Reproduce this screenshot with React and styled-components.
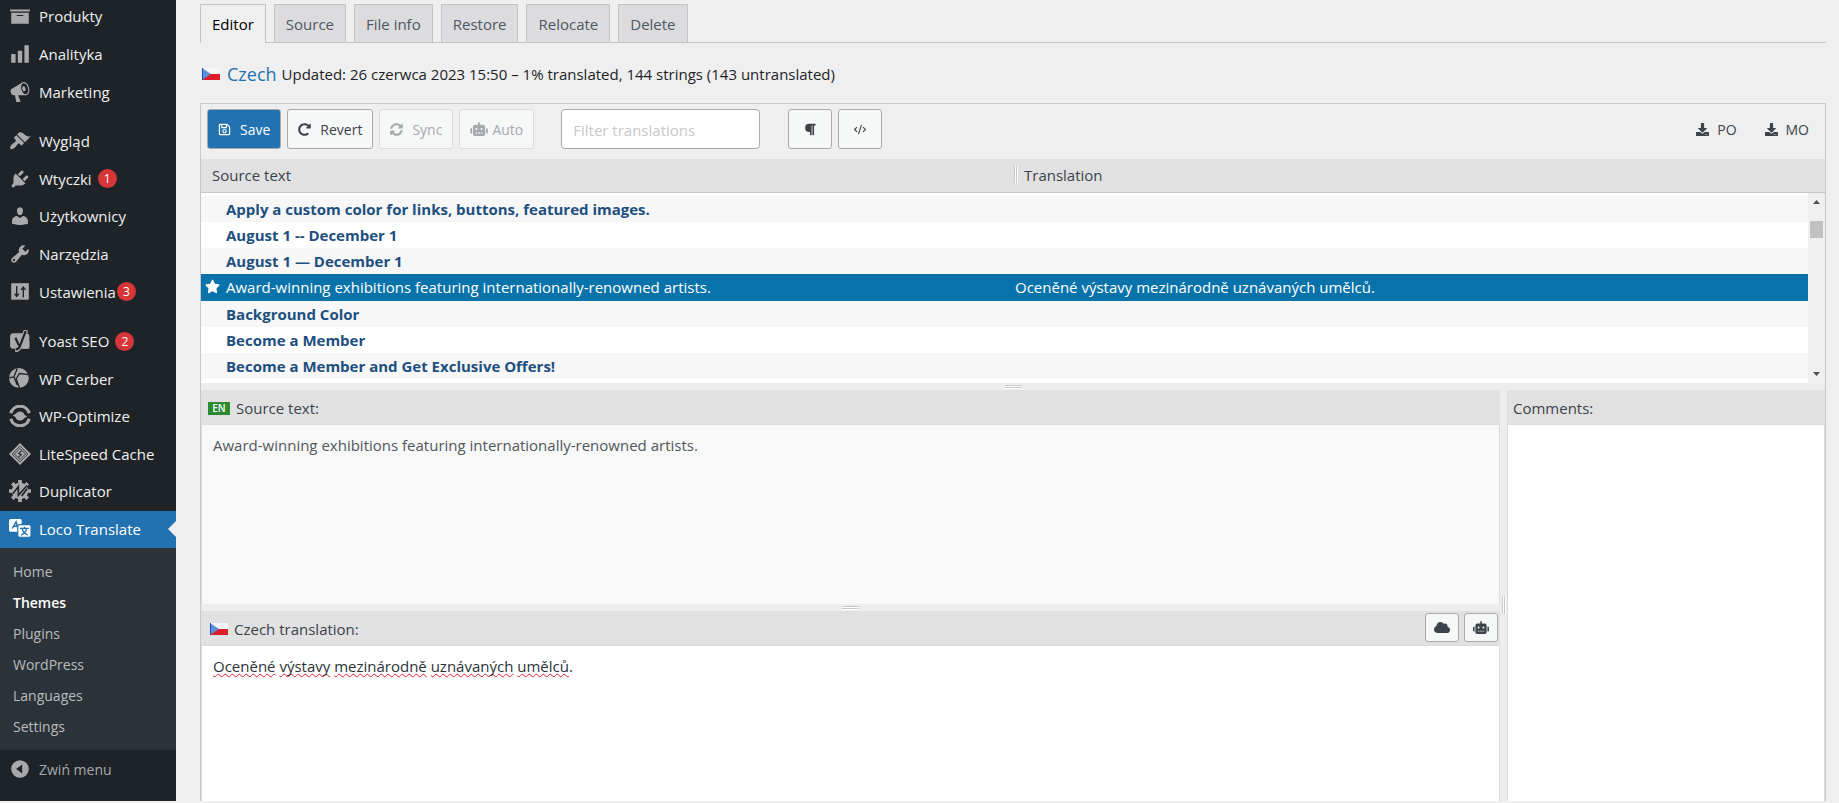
import React, { useState } from 'react'
import styled, { createGlobalStyle, css } from 'styled-components'
import { FaRegSave, FaRedoAlt, FaSyncAlt, FaRobot, FaParagraph, FaDownload, FaCloud, FaStar } from 'react-icons/fa'
import { LuCodeXml } from 'react-icons/lu'

const icons = {
    products: <path d="M19 4v2H1V4h18zM2 7h16v10H2V7zm11 3V9H7v1h6z" />,
    analytics: <path d="M18 18V2h-4v16h4zm-6 0V7H8v11h4zm-6 0v-8H2v8h4z" />,
    marketing: <path d="M18.15 5.94c.46 1.62.38 3.22-.02 4.48-.42 1.28-1.26 2.18-2.3 2.48-.16.06-.26.06-.4.06-.06.02-.12.02-.18.02-.06.02-.14.02-.22.02h-6.8l2.22 5.5c.02.14-.06.26-.14.34-.08.1-.24.16-.34.16H6.95c-.1 0-.26-.06-.34-.16-.08-.08-.16-.2-.14-.34l-1-5.5H4.25l-.02-.02c-.5.06-1.08-.18-1.54-.62s-.88-1.08-1.06-1.88c-.24-.8-.2-1.56-.02-2.2.18-.62.58-1.08 1.06-1.3l.02-.02 9-5.4c.1-.06.18-.1.24-.16.06-.04.14-.08.24-.12.16-.08.28-.12.5-.18 1.04-.3 2.24.1 3.22.98s1.84 2.24 2.26 3.86zm-2.58 5.98h-.02c.4-.1.74-.34 1.04-.7.58-.7.86-1.76.86-3.04 0-.64-.1-1.3-.28-1.98-.34-1.36-1.02-2.5-1.78-3.24s-1.68-1.1-2.46-.88c-.82.22-1.4.96-1.7 2-.32 1.04-.28 2.36.06 3.72.38 1.36 1 2.5 1.8 3.24.78.74 1.62 1.1 2.48.88zm-2.54-7.08c.22-.04.42-.02.62.04.38.16.76.48 1.02 1s.42 1.2.42 1.78c0 .3-.04.56-.12.8-.18.48-.44.84-.86.94-.34.1-.8-.06-1.14-.4s-.64-.86-.78-1.5c-.18-.62-.12-1.24.02-1.72s.48-.84.82-.94z" />,
    appearance: <path d="M14.48 11.06L7.41 3.99l1.5-1.5c.5-.56 2.3-.47 3.51.32 1.21.8 1.43 1.28 2.91 2.1 1.18.64 2.45 1.26 4.45.85zm-.71.71L6.7 4.7 4.93 6.47c-.39.39-.39 1.02 0 1.41l1.06 1.06c.39.39.39 1.03 0 1.42-.6.6-1.43 1.11-2.21 1.69-.35.26-.7.53-1.01.84C1.43 14.23.4 16.08 1.4 17.07c.99 1 2.84-.03 4.18-1.36.31-.31.58-.66.85-1.02.57-.78 1.08-1.61 1.69-2.21.39-.39 1.02-.39 1.41 0l1.06 1.06c.39.39 1.02.39 1.41 0z" />,
    plugins: <path d="M13.11 4.36L9.87 7.6 8 5.73l3.24-3.24c.35-.34 1.05-.2 1.56.32.52.51.66 1.21.31 1.55zm-8 1.77l.91-1.12 9.01 9.01-1.19.84c-.71.71-2.63 1.16-3.82 1.16H6.14L4.9 17.26c-.59.59-1.54.59-2.12 0-.59-.58-.59-1.53 0-2.12l1.24-1.24v-3.88c0-1.13.4-3.19 1.09-3.89zm7.26 3.97l3.24-3.24c.34-.35 1.04-.21 1.55.31.52.51.66 1.21.31 1.55l-3.24 3.25z" />,
    users: <path d="M10 9.25c-2.27 0-2.73-3.44-2.73-3.44C7 4.02 7.82 2 9.97 2c2.16 0 2.98 2.02 2.71 3.81 0 0-.41 3.44-2.68 3.44zm0 2.57L12.72 10c2.39 0 4.52 2.33 4.52 4.53v2.49s-3.65 1.13-7.24 1.13c-3.65 0-7.24-1.13-7.24-1.13v-2.49c0-2.25 1.94-4.48 4.47-4.48z" />,
    tools: <path d="M16.68 9.77c-1.34 1.34-3.3 1.67-4.95.99l-5.41 6.52c-.99.99-2.59.99-3.58 0s-.99-2.59 0-3.57l6.52-5.42c-.68-1.65-.35-3.61.99-4.95 1.28-1.28 3.12-1.62 4.72-1.06l-2.89 2.89 2.82 2.82 2.86-2.87c.53 1.58.18 3.39-1.08 4.65zM3.81 16.21c.4.39 1.04.39 1.43 0 .4-.4.4-1.04 0-1.43-.39-.4-1.03-.4-1.43 0-.39.39-.39 1.03 0 1.43z" />,
    settings: (
        <>
            <path d="M2 2h16v15H2z" />
            <path d="M7 4.500v9M5 11.500l2 2.500 2-2.500M13 15V5.500M11 8l2-2.500L15 8" fill="none" stroke="#1d2327" strokeWidth="1.200" />
        </>
    ),
    yoast: (
        <>
            <rect x="1" y="3" width="17.500" height="14" rx="3" />
            <path d="M13 10h5.500v7H13z" />
            <path d="M15.500 0L10 14.500Q8.700 18.300 5.500 18.500" fill="none" stroke="currentColor" strokeWidth="4" />
            <path d="M15.200 1L10 14.500Q8.700 17.500 6 17.700M5.800 7l3.200 7" fill="none" stroke="#1d2327" strokeWidth="2" />
        </>
    ),
    cerber: (
        <>
            <circle cx="9" cy="9" r="9" />
            <path d="M7.500.5L4.500 8l3 7.500M4.500 8L0 9M18 6l-8.500-1L6.500 10l3 8" fill="none" stroke="#1d2327" strokeWidth="1.200" />
        </>
    ),
    optimize: (
        <>
            <path d="M1.600 7.500A8.700 8.700 0 0 1 18.400 7.500M18.400 12.500A8.700 8.700 0 0 1 1.600 12.500" fill="none" stroke="currentColor" strokeWidth="2.800" />
            <path d="M3.500 9.500l4-2.500v5zM16.500 10.500l-4 2.500V8z" />
            <circle cx="10" cy="10" r="4.200" />
        </>
    ),
    litespeed: (
        <>
            <path d="M10 0l10 10-10 10L0 10z" />
            <path d="M10 2.800L17.200 10 10 17.200 2.800 10zM10 5L15 10 10 15 5 10z" fill="none" stroke="#1d2327" strokeWidth=".7" />
            <path d="M11.500 7L8.800 9.500l2.500 1L8.500 13" fill="none" stroke="#1d2327" strokeWidth="1" />
        </>
    ),
    duplicator: (
        <>
            <circle cx="10" cy="10" r="7.500" />
            <path d="M10 0v20M0 10h20M3 3l14 14M3 17L17 3" fill="none" stroke="currentColor" strokeWidth="3.400" />
            <path d="M3.500 12.500l5-6.500v8L16.500 5M11.500 14.500l5-6.500" fill="none" stroke="#1d2327" strokeWidth="1.500" />
        </>
    ),
    loco: (
        <>
            <rect x="0" y="1" width="11.500" height="11.500" rx="1.500" />
            <path d="M3 9.500L6.500 3.500 8 9.500M4.500 7.500h3" fill="none" stroke="#2271b1" strokeWidth="1.300" />
            <rect x="8" y="6" width="12" height="11.500" rx="1.500" stroke="#2271b1" strokeWidth="1" />
            <path d="M10 9.500h8M14 8v1.500M11 15.500Q15.500 13.500 16 9.500M12 9.500q.500 4 5 6" fill="none" stroke="#2271b1" strokeWidth="1.200" />
        </>
    ),
    collapse: <path fillRule="evenodd" d="M10 2a8 8 0 1 0 0 16 8 8 0 0 0 0-16zM12 5.800v8.400L6.500 10z" />,
}

const menuGroups = [
    [
        { icon: 'products', label: 'Produkty' },
        { icon: 'analytics', label: 'Analityka' },
        { icon: 'marketing', label: 'Marketing' },
    ],
    [
        { icon: 'appearance', label: 'Wygląd' },
        { icon: 'plugins', label: 'Wtyczki', count: 1 },
        { icon: 'users', label: 'Użytkownicy' },
        { icon: 'tools', label: 'Narzędzia' },
        { icon: 'settings', label: 'Ustawienia', count: 3, tight: true },
    ],
    [
        { icon: 'yoast', label: 'Yoast SEO', count: 2 },
        { icon: 'cerber', label: 'WP Cerber' },
        { icon: 'optimize', label: 'WP-Optimize' },
        { icon: 'litespeed', label: 'LiteSpeed Cache' },
        { icon: 'duplicator', label: 'Duplicator' },
        { icon: 'loco', label: 'Loco Translate', current: true },
    ],
]

const subMenu = ['Home', 'Themes', 'Plugins', 'WordPress', 'Languages', 'Settings']
const tabs = ['Editor', 'Source', 'File info', 'Restore', 'Relocate', 'Delete']

const strings = [
    { source: 'Apply a custom color for links, buttons, featured images.', target: '' },
    { source: 'August 1 -- December 1', target: '' },
    { source: 'August 1 — December 1', target: '' },
    {
        source: 'Award-winning exhibitions featuring internationally-renowned artists.',
        target: 'Oceněné výstavy mezinárodně uznávaných umělců.',
    },
    { source: 'Background Color', target: '' },
    { source: 'Become a Member', target: '' },
    { source: 'Become a Member and Get Exclusive Offers!', target: '' },
]

const MenuIcon = ({ name }) => (
    <IconSvg viewBox="0 0 20 20" aria-hidden="true">{icons[name]}</IconSvg>
)

const CzechFlag = () => (
    <FlagSvg viewBox="0 0 18 12" aria-hidden="true">
        <rect width="18" height="12" fill="#f6f6f6" />
        <rect y="6" width="18" height="6" fill="#dc1f2b" />
        <path d="M0 0l9 6-9 6z" fill="#5b8fd6" />
        <path d="M0 0v12" stroke="#1d50b0" strokeWidth="2" />
    </FlagSvg>
)

const App = () => {
    const [selected, setSelected] = useState(3)
    const [filter, setFilter] = useState('')
    const [comments, setComments] = useState('')
    const [translations, setTranslations] = useState(strings.map((s) => s.target))

    const changeTranslation = (e) => {
        const next = [...translations]
        next[selected] = e.target.value
        setTranslations(next)
    }

    return (
        <>
            <GlobalStyle />
            <Page>
                <Sidebar>
                    {menuGroups.map((group, i) => (
                        <MenuGroup key={i}>
                            {group.map((item) => (
                                <MenuLink href="#" key={item.label} $current={item.current}>
                                    <MenuIcon name={item.icon} />
                                    {item.label}
                                    {item.count && <Count $tight={item.tight}>{item.count}</Count>}
                                </MenuLink>
                            ))}
                        </MenuGroup>
                    ))}
                    <SubMenu>
                        {subMenu.map((label) => (
                            <SubLink href="#" key={label} $current={label === 'Themes'}>{label}</SubLink>
                        ))}
                    </SubMenu>
                    <Collapse type="button">
                        <MenuIcon name="collapse" />
                        Zwiń menu
                    </Collapse>
                </Sidebar>

                <Main>
                    <Tabs>
                        {tabs.map((tab) => (
                            <Tab href="#" key={tab} $active={tab === 'Editor'}>{tab}</Tab>
                        ))}
                    </Tabs>

                    <Heading>
                        <CzechFlag />
                        <Language>Czech</Language>
                        <Status>Updated: 26 czerwca 2023 15:50 – 1% translated, 144 strings (143 untranslated)</Status>
                    </Heading>

                    <Editor>
                        <Toolbar>
                            <Buttons>
                                <Button type="button" $primary><FaRegSave />Save</Button>
                                <Button type="button"><FaRedoAlt />Revert</Button>
                                <Button type="button" disabled><FaSyncAlt />Sync</Button>
                                <Button type="button" disabled $tight><FaRobot />Auto</Button>
                            </Buttons>
                            <Filter
                                type="text"
                                aria-label="Filter translations"
                                placeholder="Filter translations"
                                value={filter}
                                onChange={(e) => setFilter(e.target.value)}
                            />
                            <Buttons>
                                <IconButton type="button" aria-label="Toggle invisibles"><FaParagraph /></IconButton>
                                <IconButton type="button" aria-label="Toggle code view"><LuCodeXml /></IconButton>
                            </Buttons>
                            <Downloads>
                                <Download href="#"><FaDownload />PO</Download>
                                <Download href="#"><FaDownload />MO</Download>
                            </Downloads>
                        </Toolbar>

                        <ListWrap>
                            <List>
                                <ListHead>
                                    <ListRow>
                                        <HeadCell>Source text</HeadCell>
                                        <HeadCell><Grip $vertical />Translation</HeadCell>
                                    </ListRow>
                                </ListHead>
                                <ListBody>
                                    {strings.map((string, i) => (
                                        <StringRow
                                            key={string.source}
                                            $selected={i === selected}
                                            $todo={!translations[i]}
                                            onClick={() => setSelected(i)}
                                        >
                                            <SourceCell>
                                                <Mark>{i === selected && <FaStar />}</Mark>
                                                {string.source}
                                            </SourceCell>
                                            <TargetCell>{translations[i]}</TargetCell>
                                        </StringRow>
                                    ))}
                                </ListBody>
                            </List>
                            <ScrollBar>
                                <Arrow viewBox="0 0 7 4"><path d="M0 4l3.500-4L7 4z" /></Arrow>
                                <Thumb />
                                <Arrow viewBox="0 0 7 4"><path d="M0 0l3.500 4L7 0z" /></Arrow>
                            </ScrollBar>
                        </ListWrap>

                        <Splitter><Grip /></Splitter>

                        <Panes>
                            <Column>
                                <Pane>
                                    <PaneHead>
                                        <LangBadge>EN</LangBadge>
                                        Source text:
                                    </PaneHead>
                                    <SourceText>{strings[selected].source}</SourceText>
                                </Pane>
                                <Splitter><Grip /></Splitter>
                                <Pane>
                                    <PaneHead>
                                        <CzechFlag />
                                        <label htmlFor="translation">Czech translation:</label>
                                        <PaneTools>
                                            <SmallButton type="button" aria-label="Needs review"><FaCloud /></SmallButton>
                                            <SmallButton type="button" aria-label="Suggestions"><FaRobot /></SmallButton>
                                        </PaneTools>
                                    </PaneHead>
                                    <TextBox>
                                        <Spelling aria-hidden="true">
                                            {translations[selected].split(/([\s.]+)/).map((word, i) => (
                                                i % 2 ? word : <u key={i}>{word}</u>
                                            ))}
                                        </Spelling>
                                        <TextArea
                                            id="translation"
                                            spellCheck="false"
                                            value={translations[selected]}
                                            onChange={changeTranslation}
                                        />
                                    </TextBox>
                                </Pane>
                            </Column>
                            <SideSplitter><Grip $vertical /></SideSplitter>
                            <Pane>
                                <PaneHead $plain>
                                    <label htmlFor="comments">Comments:</label>
                                </PaneHead>
                                <TextBox>
                                    <TextArea
                                        id="comments"
                                        value={comments}
                                        onChange={(e) => setComments(e.target.value)}
                                    />
                                </TextBox>
                            </Pane>
                        </Panes>
                    </Editor>
                </Main>
            </Page>
        </>
    )
}

const GlobalStyle = createGlobalStyle`
    * {
        box-sizing: border-box;
    }

    body {
        margin: 0;
        background: #efefef;
        color: #1d2327;
        font-family: "Open Sans", "Noto Sans", sans-serif;
        font-size: 15px;
    }

    button, input, textarea {
        font-family: inherit;
    }

    a {
        text-decoration: none;
    }
`

const Page = styled.div`
    display: flex;
    height: 100vh;
    padding-bottom: 2px;
    overflow: hidden;
`

const Sidebar = styled.nav`
    flex: none;
    width: 176px;
    background: #1d2327;
    overflow: hidden;
`

const MenuGroup = styled.div`
    display: grid;
    grid-auto-rows: 1fr;
    height: 225px;
    margin-top: 12px;

    &:nth-child(1) {
        height: 113px;
        margin-top: -2px;
    }

    &:nth-child(2) {
        height: 188px;
    }
`

const IconSvg = styled.svg`
    flex: none;
    width: 22px;
    height: 22px;
    fill: currentColor;
    color: #a7aaad;
`

const MenuLink = styled.a`
    display: flex;
    align-items: center;
    padding: 0 0 1px 9px;
    color: #f0f0f1;

    ${IconSvg} {
        margin-right: 8px;
    }

    ${({ $current }) => $current && css`
        position: relative;
        background: #2271b1;
        color: #fff;

        ${IconSvg} {
            color: #fff;
        }

        &::after {
            content: "";
            position: absolute;
            right: 0;
            top: 10px;
            border: 8px solid transparent;
            border-left: none;
            border-right-color: #efefef;
        }
    `}
`

const Count = styled.span`
    min-width: 19px;
    height: 19px;
    margin-left: ${({ $tight }) => ($tight ? '1px' : '6px')};
    border-radius: 10px;
    background: #d63638;
    color: #fff;
    font-size: 12px;
    line-height: 19px;
    text-align: center;
`

const SubMenu = styled.div`
    padding: 8px 0;
    background: #2c3338;
`

const SubLink = styled.a`
    display: block;
    padding-left: 13px;
    font-size: 14px;
    line-height: 31px;
    color: ${({ $current }) => ($current ? '#fff' : '#b9bcbe')};
    font-weight: ${({ $current }) => ($current ? 600 : 400)};
`

const Collapse = styled.button`
    display: flex;
    align-items: center;
    gap: 8px;
    width: 100%;
    height: 38px;
    padding: 0 0 0 9px;
    border: none;
    background: none;
    color: #a7aaad;
    font-size: 14px;
`

const Main = styled.main`
    flex: 1;
    min-width: 0;
    display: flex;
    flex-direction: column;
    padding: 4px 13px 0 24px;
`

const Tabs = styled.nav`
    display: flex;
    gap: 8px;
    border-bottom: 1px solid #c3c4c7;
`

const Tab = styled.a`
    height: 38px;
    padding: 0 11px;
    border: 1px solid #c3c4c7;
    border-bottom: none;
    background: #dcdcde;
    color: #50575e;
    font-weight: 500;
    line-height: 39px;

    ${({ $active }) => $active && css`
        height: 39px;
        margin-bottom: -1px;
        background: #efefef;
        color: #000;
    `}
`

const FlagSvg = styled.svg`
    width: 18px;
    height: 12px;
`

const Heading = styled.header`
    display: flex;
    align-items: center;
    height: 60px;
    padding: 2px 2px 0;

    ${FlagSvg} {
        margin-right: 7px;
    }
`

const Language = styled.h1`
    margin: 0 5px 0 0;
    color: #2271b1;
    font-size: 18px;
    font-weight: 500;
`

const Status = styled.span`
    font-size: 15px;
`

const Editor = styled.section`
    flex: 1;
    min-height: 0;
    display: flex;
    flex-direction: column;
    border: 1px solid #c8c8c8;
    border-bottom: none;
`

const Toolbar = styled.div`
    display: flex;
    align-items: flex-start;
    height: 55px;
    padding: 5px 6px;
`

const Buttons = styled.div`
    display: flex;
    gap: 6px;
`

const Button = styled.button`
    display: flex;
    align-items: center;
    gap: ${({ $tight }) => ($tight ? '4px' : '9px')};
    height: 40px;
    padding: 0 10px;
    border: 1px solid #aaa;
    border-radius: 3px;
    background: ${({ $primary }) => ($primary ? '#2271b1' : '#f6f7f7')};
    color: ${({ $primary }) => ($primary ? '#fff' : '#3c434a')};
    font-size: 14px;

    svg {
        width: ${({ $tight }) => ($tight ? '18px' : '13px')};
        height: ${({ $tight }) => ($tight ? '14px' : '13px')};
    }

    &:disabled {
        border-color: #dcdcde;
        color: #a7aaad;
    }
`

const IconButton = styled(Button)`
    justify-content: center;
    width: 44px;
    padding: 0;

    svg {
        width: 14px;
    }
`

const SmallButton = styled(Button)`
    justify-content: center;
    width: 34px;
    height: 29px;
    padding: 0;

    svg {
        width: 16px;
    }
`

const Filter = styled.input`
    width: 199px;
    height: 40px;
    margin: 0 28px 0 27px;
    padding: 2px 11px 0;
    border: 1px solid #aaa;
    border-radius: 4px;
    background: #fff;
    color: #2c3338;
    font-size: 15px;

    &::placeholder {
        color: #c8c8c8;
    }
`

const Downloads = styled.div`
    display: flex;
    gap: 28px;
    margin-left: auto;
    padding-right: 10px;
`

const Download = styled.a`
    display: flex;
    align-items: center;
    gap: 8px;
    height: 40px;
    color: #3c434a;
    font-size: 14px;

    svg {
        width: 13px;
        height: 13px;
    }
`

const ListWrap = styled.div`
    position: relative;
`

const List = styled.table`
    display: block;
`

const ListHead = styled.thead`
    display: block;
    border-bottom: 1px solid #c8c8c8;
    background: #e1e1e1;
`

const ListRow = styled.tr`
    display: grid;
    grid-template-columns: 1fr 1fr;
`

const Grip = styled.i`
    display: block;
    width: ${({ $vertical }) => ($vertical ? '4px' : '17px')};
    height: ${({ $vertical }) => ($vertical ? '17px' : '4px')};
    background: repeating-linear-gradient(
        ${({ $vertical }) => ($vertical ? '90deg' : '180deg')},
        #c8c8c8 0 1px,
        #fff 1px 2px
    );
`

const HeadCell = styled.th`
    display: flex;
    align-items: center;
    height: 33px;
    padding: 0 0 2px 11px;
    color: #3c434a;
    font-weight: 400;

    ${Grip} {
        margin: 0 6px 0 -10px;
    }
`

const ListBody = styled.tbody`
    display: block;
    padding: 3px 0 4px;
    background: #fff;
`

const StringRow = styled(ListRow)`
    height: ${({ $selected }) => ($selected ? '27px' : '26px')};
    color: #1d4f7f;
    font-weight: ${({ $todo }) => ($todo ? 700 : 400)};
    line-height: 26px;
    white-space: nowrap;

    &:nth-child(odd) {
        background: #f7f7f7;
    }

    ${({ $selected }) => $selected && css`
        &&& {
            background: #0873aa;
            color: #fff;
        }
    `}
`

const SourceCell = styled.td`
    display: flex;
    padding: 0;
`

const TargetCell = styled.td`
    padding: 0 0 0 2px;
`

const Mark = styled.span`
    flex: none;
    display: flex;
    justify-content: center;
    width: 25px;
    padding: 5px 2px 0 0;
`

const ScrollBar = styled.div`
    position: absolute;
    top: 34px;
    right: 0;
    bottom: 0;
    display: flex;
    flex-direction: column;
    align-items: center;
    width: 17px;
    padding: 7px 0;
    background: #f0f0f0;
`

const Arrow = styled.svg`
    width: 7px;
    height: 4px;
    fill: #505050;

    &:last-child {
        margin-top: auto;
    }
`

const Thumb = styled.div`
    width: 13px;
    height: 17px;
    margin-top: 17px;
    background: #c1c1c1;
`

const Splitter = styled.div`
    flex: none;
    display: flex;
    align-items: center;
    justify-content: center;
    height: 7px;
    background: #ededed;
`

const SideSplitter = styled(Splitter)`
    height: auto;
    padding-top: 20px;
`

const Panes = styled.div`
    flex: 1;
    min-height: 0;
    display: grid;
    grid-template-columns: 1fr 7px 318px;
`

const Column = styled.div`
    display: grid;
    grid-template-rows: 214px auto 1fr;
    min-height: 0;
`

const Pane = styled.div`
    display: flex;
    flex-direction: column;
    min-height: 0;
`

const PaneHead = styled.div`
    flex: none;
    display: flex;
    align-items: center;
    gap: 6px;
    height: 34px;
    padding: ${({ $plain }) => ($plain ? '2px 6px 0' : '2px 2px 0 7px')};
    background: #e1e1e1;
    color: #3c434a;

    ${FlagSvg} {
        margin-left: 2px;
    }
`

const LangBadge = styled.span`
    width: 22px;
    height: 13px;
    background: #2c8a30;
    color: #fff;
    font-size: 10px;
    font-weight: 600;
    line-height: 13px;
    text-align: center;
`

const PaneTools = styled.div`
    display: flex;
    gap: 5px;
    margin-left: auto;
    padding-bottom: 3px;
`

const SourceText = styled.div`
    flex: 1;
    padding: 9px 11px;
    border: 1px solid #dcdcdc;
    border-bottom: none;
    background: #f8f8f8;
    color: #50575e;
    line-height: 22px;
`

const TextBox = styled.div`
    flex: 1;
    position: relative;
    min-height: 0;
    border: 1px solid #dcdcdc;
    border-bottom: none;
    background: #fff;
`

// the wavy marks sit behind the transparent text area
const Spelling = styled.div`
    position: absolute;
    inset: 0;
    padding: 9px 11px;
    color: transparent;
    line-height: 22px;

    u {
        text-decoration: underline wavy #e5202e 1px;
        text-decoration-skip-ink: none;
        text-underline-offset: 1px;
    }
`

const TextArea = styled.textarea`
    position: relative;
    display: block;
    width: 100%;
    height: 100%;
    padding: 9px 11px;
    border: none;
    outline: none;
    resize: none;
    background: transparent;
    color: #2c3338;
    font-size: 15px;
    line-height: 22px;
`

export default App
